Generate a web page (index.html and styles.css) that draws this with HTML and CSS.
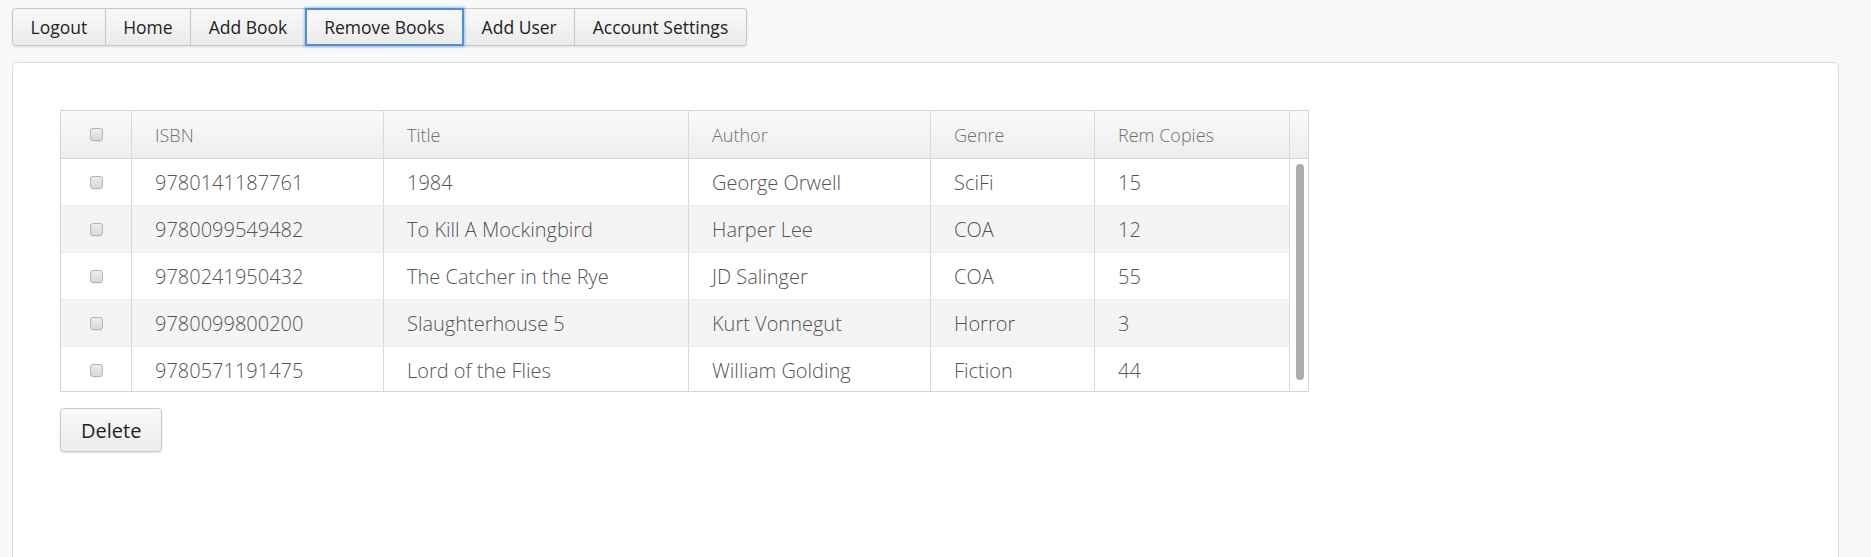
FILE: index.html
```html
<!DOCTYPE html>
<html lang="en">
<head>
<meta charset="utf-8">
<title>Remove Books</title>
<link rel="stylesheet" href="styles.css">
</head>
<body>
<nav class="nav">
  <button class="nav-btn">Logout</button>
  <button class="nav-btn">Home</button>
  <button class="nav-btn">Add Book</button>
  <button class="nav-btn active">Remove Books</button>
  <button class="nav-btn">Add User</button>
  <button class="nav-btn">Account Settings</button>
</nav>
<main class="panel">
  <div class="grid">
    <div class="thead">
      <div class="cell c-chk"><span class="chk"></span></div>
      <div class="cell c-isbn">ISBN</div>
      <div class="cell c-title">Title</div>
      <div class="cell c-author">Author</div>
      <div class="cell c-genre">Genre</div>
      <div class="cell c-rem">Rem Copies</div>
      <div class="cell c-corner"></div>
    </div>
    <div class="tbody">
      <div class="rows">
        <div class="row">
          <div class="cell c-chk"><span class="chk"></span></div>
          <div class="cell c-isbn">9780141187761</div>
          <div class="cell c-title">1984</div>
          <div class="cell c-author">George Orwell</div>
          <div class="cell c-genre">SciFi</div>
          <div class="cell c-rem">15</div>
        </div>
        <div class="row">
          <div class="cell c-chk"><span class="chk"></span></div>
          <div class="cell c-isbn">9780099549482</div>
          <div class="cell c-title">To Kill A Mockingbird</div>
          <div class="cell c-author">Harper Lee</div>
          <div class="cell c-genre">COA</div>
          <div class="cell c-rem">12</div>
        </div>
        <div class="row">
          <div class="cell c-chk"><span class="chk"></span></div>
          <div class="cell c-isbn">9780241950432</div>
          <div class="cell c-title">The Catcher in the Rye</div>
          <div class="cell c-author">JD Salinger</div>
          <div class="cell c-genre">COA</div>
          <div class="cell c-rem">55</div>
        </div>
        <div class="row">
          <div class="cell c-chk"><span class="chk"></span></div>
          <div class="cell c-isbn">9780099800200</div>
          <div class="cell c-title">Slaughterhouse 5</div>
          <div class="cell c-author">Kurt Vonnegut</div>
          <div class="cell c-genre">Horror</div>
          <div class="cell c-rem">3</div>
        </div>
        <div class="row">
          <div class="cell c-chk"><span class="chk"></span></div>
          <div class="cell c-isbn">9780571191475</div>
          <div class="cell c-title">Lord of the Flies</div>
          <div class="cell c-author">William Golding</div>
          <div class="cell c-genre">Fiction</div>
          <div class="cell c-rem">44</div>
        </div>
      </div>
      <div class="vscroll"><div class="thumb"></div></div>
    </div>
  </div>
  <button class="delete-btn">Delete</button>
</main>
</body>
</html>
```
FILE: styles.css
```css
* { box-sizing: border-box; }

html, body {
  margin: 0;
  background: #f8f8f8;
  font-family: "Open Sans", "Liberation Sans", sans-serif;
  overflow: hidden;
}

body {
  padding: 8px 32px 0 12px;
}

.nav {
  display: inline-flex;
  height: 38px;
  border-radius: 4px;
  box-shadow: 0 1px 2px rgba(0,0,0,0.12);
}

.nav-btn {
  height: 38px;
  padding: 0 17.5px;
  margin: 0;
  font-family: inherit;
  font-size: 17.5px;
  color: #222;
  background: linear-gradient(#f9f9f9, #ebebeb);
  border: 1px solid #c6c6c6;
  border-left-width: 0;
  border-radius: 0;
  position: relative;
}

.nav-btn:first-child {
  border-left-width: 1px;
  border-radius: 4px 0 0 4px;
}

.nav-btn:last-child {
  border-radius: 0 4px 4px 0;
}

.nav-btn.active {
  border: 2px solid #4a8fe0;
  box-shadow: 0 0 2px 1px rgba(90,150,230,0.55);
  z-index: 1;
  margin-left: -1px;
}

.panel {
  margin-top: 16px;
  height: 520px;
  background: #fff;
  border: 1px solid #dcdcdc;
  border-radius: 5px;
  padding: 47px;
}

.grid {
  width: 1249px;
  border: 1px solid #d6d6d6;
}

.thead {
  display: flex;
  height: 48px;
  border-bottom: 1px solid #d6d6d6;
  background: linear-gradient(#fafafa, #ededed);
}

.tbody {
  display: flex;
  height: 232px;
}

.rows {
  flex: 1;
  overflow: hidden;
}

.row {
  display: flex;
  height: 47px;
  border-bottom: 1px solid #ececec;
  background: #fff;
}

.row:nth-child(even) {
  background: #f4f4f4;
}

.cell {
  display: flex;
  align-items: center;
  padding-left: 23px;
  border-right: 1px solid #d9d9d9;
  font-weight: 300;
  font-size: 20px;
  color: #555;
  white-space: nowrap;
}

.thead .cell {
  font-size: 18px;
  color: #707070;
}

.c-chk { width: 71px; padding-left: 0; justify-content: center; }
.c-isbn { width: 252px; }
.c-title { width: 305px; }
.c-author { width: 242px; }
.c-genre { width: 164px; }
.c-rem { width: 195px; }
.c-corner { width: 18px; border-right: 0; padding: 0; }

.chk {
  width: 13px;
  height: 13px;
  border: 1px solid #b4b4b4;
  border-radius: 3px;
  background: linear-gradient(#ececec, #d9d9d9);
  box-shadow: 0 1px 0 rgba(0,0,0,0.05);
}

.vscroll {
  width: 18px;
  background: #fff;
  padding: 5px 0 11px 6px;
}

.thumb {
  width: 8px;
  height: 100%;
  background: #adadad;
  border-radius: 4px;
}

.delete-btn {
  display: block;
  margin-top: 16px;
  height: 44px;
  padding: 0 20px;
  font-family: inherit;
  font-size: 20px;
  color: #222;
  background: linear-gradient(#f9f9f9, #ececec);
  border: 1px solid #c8c8c8;
  border-radius: 4px;
  box-shadow: 0 1px 2px rgba(0,0,0,0.12);
}
```
